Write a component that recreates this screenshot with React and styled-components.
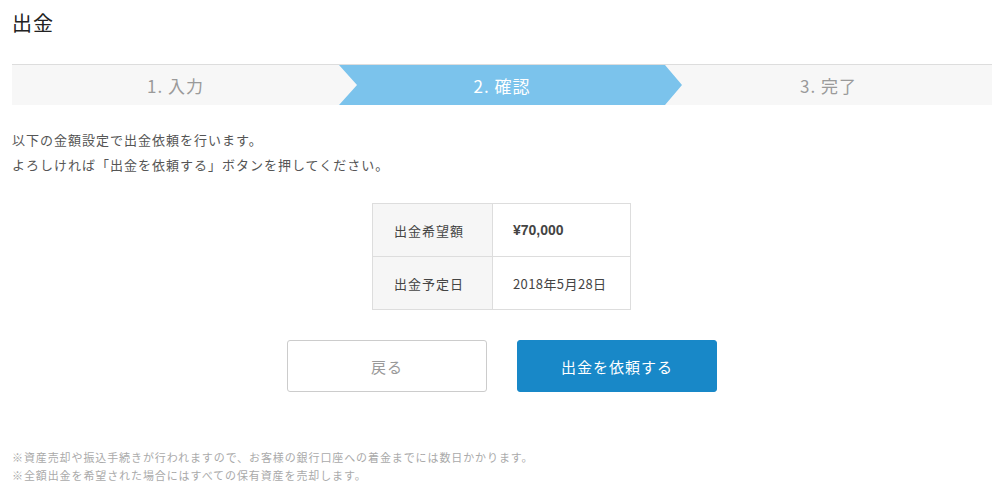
import styled, { createGlobalStyle } from "styled-components";

const GlobalStyle = createGlobalStyle`
  body {
    margin: 0;
    background: #fff;
    font-family: "Noto Sans CJK JP", "Noto Sans", sans-serif;
    color: #333;
  }
`;

const Page = styled.div`
  width: 980px;
  padding: 0 12px;
`;

const Title = styled.h1`
  margin: 0;
  padding-top: 9px;
  font-size: 20px;
  font-weight: 400;
  line-height: 28px;
  letter-spacing: 1px;
  color: #222;
`;

const Steps = styled.div`
  display: flex;
  margin-top: 27px;
  border-top: 1px solid #dddddd;
  background: #f7f7f7;
  height: 40px;
`;

const Step = styled.div`
  flex: ${(p) => (p.$active ? "0 0 343px" : "1")};
  margin-right: ${(p) => (p.$active ? "-17px" : "0")};
  padding-right: ${(p) => (p.$active ? "17px" : "0")};
  box-sizing: border-box;
  position: relative;
  z-index: ${(p) => (p.$active ? 1 : 0)};
  display: flex;
  align-items: center;
  justify-content: center;
  font-size: 17px;
  letter-spacing: 1px;
  color: ${(p) => (p.$active ? "#fff" : "#9a9a9a")};
  background: ${(p) => (p.$active ? "#7bc3ec" : "transparent")};
  clip-path: ${(p) =>
    p.$active
      ? "polygon(0 0, calc(100% - 17px) 0, 100% 50%, calc(100% - 17px) 100%, 0 100%, 18px 50%)"
      : "none"};
`;

const Intro = styled.p`
  margin: 22px 0 0;
  font-size: 13px;
  line-height: 25px;
  letter-spacing: 1px;
  color: #555;
`;

const Table = styled.table`
  margin: 26px 0 0 360px;
  border-collapse: collapse;
  font-size: 13px;
`;

const Label = styled.th`
  width: 120px;
  height: 53px;
  padding: 0 0 0 21px;
  box-sizing: border-box;
  text-align: left;
  font-weight: 400;
  letter-spacing: 1px;
  color: #444;
  background: #f6f6f6;
  border: 1px solid #dddddd;
`;

const Value = styled.td`
  width: 138px;
  height: 53px;
  padding: 0 0 0 20px;
  box-sizing: border-box;
  color: #444;
  letter-spacing: ${(p) => (p.$bold ? "0" : "0.4px")};
  font-weight: ${(p) => (p.$bold ? 700 : 400)};
  font-family: ${(p) => (p.$bold ? '"Liberation Sans", Arial, sans-serif' : "inherit")};
  font-size: ${(p) => (p.$bold ? "14px" : "13px")};
  border: 1px solid #dddddd;
`;

const Buttons = styled.div`
  display: flex;
  justify-content: center;
  gap: 30px;
  margin-top: 30px;
`;

const Button = styled.button`
  width: 200px;
  height: 52px;
  border-radius: 3px;
  font-family: inherit;
  font-size: 15px;
  letter-spacing: 1px;
  cursor: pointer;
  border: 1px solid ${(p) => (p.$primary ? "#1888c8" : "#cccccc")};
  background: ${(p) => (p.$primary ? "#1888c8" : "#fff")};
  color: ${(p) => (p.$primary ? "#fff" : "#999")};
`;

const Notes = styled.div`
  margin-top: 56px;
  font-size: 11px;
  line-height: 18px;
  letter-spacing: 0.9px;
  color: #aaa;
`;

export default function App() {
  return (
    <>
      <GlobalStyle />
      <Page>
        <Title>出金</Title>
        <Steps>
          <Step>1. 入力</Step>
          <Step $active>2. 確認</Step>
          <Step>3. 完了</Step>
        </Steps>
        <Intro>
          以下の金額設定で出金依頼を行います。
          <br />
          よろしければ「出金を依頼する」ボタンを押してください。
        </Intro>
        <Table>
          <tbody>
            <tr>
              <Label>出金希望額</Label>
              <Value $bold>¥70,000</Value>
            </tr>
            <tr>
              <Label>出金予定日</Label>
              <Value>2018年5月28日</Value>
            </tr>
          </tbody>
        </Table>
        <Buttons>
          <Button>戻る</Button>
          <Button $primary>出金を依頼する</Button>
        </Buttons>
        <Notes>
          ※資産売却や振込手続きが行われますので、お客様の銀行口座への着金までには数日かかります。
          <br />
          ※全額出金を希望された場合にはすべての保有資産を売却します。
        </Notes>
      </Page>
    </>
  );
}
